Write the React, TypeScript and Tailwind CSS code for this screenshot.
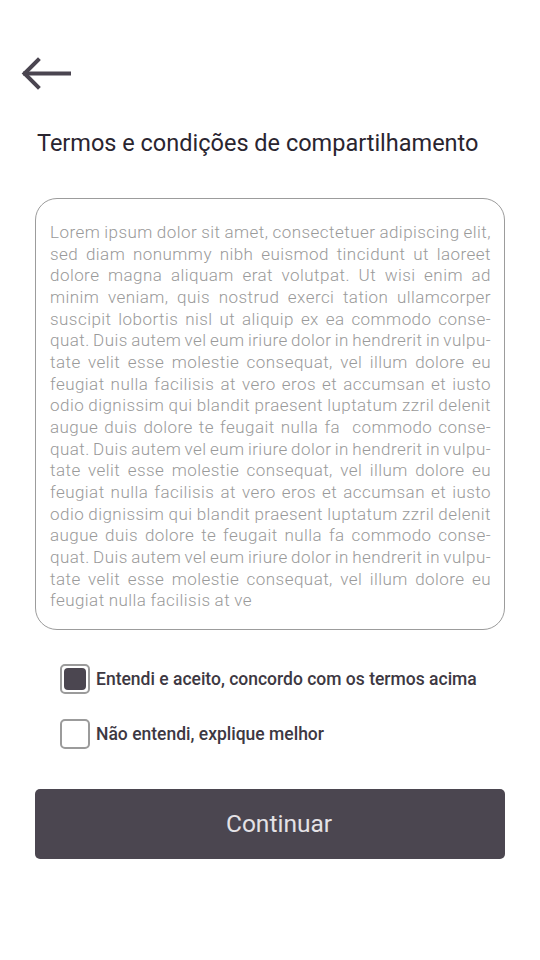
import React, { useState } from 'react';

const lines = [
  'Lorem ipsum dolor sit amet, consectetuer adipiscing elit,',
  'sed diam nonummy nibh euismod tincidunt ut laoreet',
  'dolore magna aliquam erat volutpat. Ut wisi enim ad',
  'minim veniam, quis nostrud exerci tation ullamcorper',
  'suscipit lobortis nisl ut aliquip ex ea commodo conse-',
  'quat. Duis autem vel eum iriure dolor in hendrerit in vulpu-',
  'tate velit esse molestie consequat, vel illum dolore eu',
  'feugiat nulla facilisis at vero eros et accumsan et iusto',
  'odio dignissim qui blandit praesent luptatum zzril delenit',
  'augue duis dolore te feugait nulla fa  commodo conse-',
  'quat. Duis autem vel eum iriure dolor in hendrerit in vulpu-',
  'tate velit esse molestie consequat, vel illum dolore eu',
  'feugiat nulla facilisis at vero eros et accumsan et iusto',
  'odio dignissim qui blandit praesent luptatum zzril delenit',
  'augue duis dolore te feugait nulla fa commodo conse-',
  'quat. Duis autem vel eum iriure dolor in hendrerit in vulpu-',
  'tate velit esse molestie consequat, vel illum dolore eu',
  'feugiat nulla facilisis at ve',
];

function Check({ checked, label, onClick }: { checked: boolean; label: string; onClick: () => void }) {
  return (
    <button type="button" onClick={onClick} className="flex items-center gap-[6px] text-left">
      <span className="w-[30px] h-[30px] rounded-[5px] border-2 border-[#9b9b9b] flex items-center justify-center">
        {checked && <span className="w-[22px] h-[22px] rounded-[4px] bg-[#4b4650]" />}
      </span>
      <span className="text-[17.5px] font-medium text-[#3d3842]">{label}</span>
    </button>
  );
}

export default function App() {
  const [accepted, setAccepted] = useState(true);
  const [confused, setConfused] = useState(false);

  return (
    <div className="w-[540px] h-[960px] bg-white flex flex-col" style={{ fontFamily: 'Roboto, "Noto Sans", sans-serif' }}>
      <div className="pl-[21px] pt-[56px]">
        <svg width="52" height="36" viewBox="0 0 52 36" fill="none" stroke="#4a4550" strokeWidth="4" strokeLinecap="square">
          <path d="M4 17.5 H48" />
          <path d="M17 4 L3.5 17.5 L17 31" />
        </svg>
      </div>

      <h1 className="mt-[36px] pl-[37px] text-[23.5px] leading-[30px] text-[#2a2530]">
        Termos e condições de compartilhamento
      </h1>

      <div className="mt-[40px] mx-[35px] h-[432px] rounded-[22px] border border-[#9c9c9c] pl-[14px] pr-[13px] pt-[23px]">
        <div className="text-[17px] leading-[21.65px] font-light text-[#9a9a9a] tracking-[0.45px]">
          {lines.map((l, i) => (
            <div
              key={i}
              className={
                i < lines.length - 1
                  ? 'text-justify [text-align-last:justify] whitespace-pre [word-spacing:-2.5px]'
                  : 'whitespace-pre [word-spacing:-0.5px]'
              }
            >
              {l}
            </div>
          ))}
        </div>
      </div>

      <div className="mt-[34px] pl-[60px] flex flex-col gap-[25px]">
        <Check checked={accepted} label="Entendi e aceito, concordo com os termos acima" onClick={() => setAccepted(!accepted)} />
        <Check checked={confused} label="Não entendi, explique melhor" onClick={() => setConfused(!confused)} />
      </div>

      <button type="button" className="mt-[40px] mx-[35px] h-[70px] rounded-[5px] bg-[#4b4650] pl-[18px] text-[24.5px] text-[#e4e2e6]">
        Continuar
      </button>
    </div>
  );
}
